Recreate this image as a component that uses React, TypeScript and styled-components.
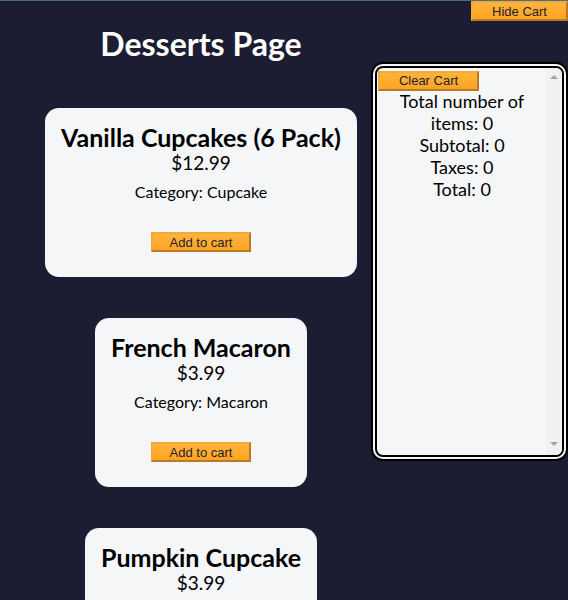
import React from 'react'
import styled, {createGlobalStyle} from 'styled-components'

const GlobalStyle = createGlobalStyle`
    html, body {
        margin: 0;
        padding: 0;
        background-color: #1c1c32;
    }
`

const TEXT_FONT = `'Trebuchet MS', Lato, sans-serif`
const BUTTON_FONT = `Arial, 'Liberation Sans', sans-serif`

const Page = styled.div`
    min-height: 100vh;
    border-top: 1px solid #4b6b86;
    box-sizing: border-box;
    font-family: ${TEXT_FONT};
`

const Main = styled.main`
    width: 402px;
    display: flex;
    flex-direction: column;
    align-items: center;
    padding-top: 24px;
`

const Title = styled.h1`
    margin: 0 0 46px;
    font-size: 32px;
    line-height: 37px;
    font-weight: 700;
    color: #ffffff;
`

const ProductList = styled.div`
    display: flex;
    flex-direction: column;
    align-items: center;
    gap: 41px;
`

const Card = styled.div`
    background-color: #f4f6f8;
    border-radius: 14px;
    padding: 15px 16px 25px;
    display: flex;
    flex-direction: column;
    align-items: center;
    color: #000000;
`

const ProductName = styled.h2`
    margin: 0;
    font-size: 25px;
    line-height: 28px;
    font-weight: 700;
`

const Price = styled.div`
    font-size: 19px;
    line-height: 23px;
`

const Category = styled.p`
    margin: 9px 0 0;
    font-size: 16px;
    line-height: 18px;
`

const OrangeButton = styled.button<{$width: number}>`
    width: ${(props) => props.$width}px;
    height: 20px;
    padding: 0;
    font-family: ${BUTTON_FONT};
    font-size: 13px;
    color: #1c1d33;
    background: linear-gradient(to bottom, #ffb43a, #ffa324);
    border: 2px solid;
    border-color: #f3a93a #b97a25 #b97a25 #f3a93a;
    cursor: pointer;
`

const AddButton = styled(OrangeButton)`
    margin-top: 31px;
`

const HideButton = styled(OrangeButton)`
    position: fixed;
    top: 1px;
    right: 0;
`

// side panel sits over the page on the right
const CartPanel = styled.aside`
    position: fixed;
    top: 62px;
    right: 0;
    width: 197px;
    height: 399px;
    box-sizing: border-box;
    border: 6px double #000000;
    border-radius: 12px;
    background-color: #f4f6f8;
    display: flex;
    overflow: hidden;
`

const CartContent = styled.div`
    flex: 1;
    min-width: 0;
    padding: 1px 0 0 1px;
    font-family: ${TEXT_FONT};
    color: #000000;
`

const ScrollTrack = styled.div`
    width: 16px;
    flex: none;
    background-color: #f1f1f1;
    display: flex;
    flex-direction: column;
    justify-content: space-between;
    align-items: center;
    padding: 7px 0 9px;
`

const ScrollArrow = styled.div<{$down?: boolean}>`
    width: 0;
    height: 0;
    border-left: 4px solid transparent;
    border-right: 4px solid transparent;
    ${(props) =>
        props.$down
            ? 'border-top: 4px solid #a3a3a3;'
            : 'border-bottom: 4px solid #a3a3a3;'}
`

const CartStats = styled.div`
    text-align: center;
    font-size: 18px;
    line-height: 22px;
    padding: 0 4px;
    margin-top: -1px;
`

type Product = {
    name: string
    price: string
    category: string
}

const products: Product[] = [
    {name: 'Vanilla Cupcakes (6 Pack)', price: '$12.99', category: 'Cupcake'},
    {name: 'French Macaron', price: '$3.99', category: 'Macaron'},
    {name: 'Pumpkin Cupcake', price: '$3.99', category: 'Cupcake'},
]

const ProductCard: React.FC<{product: Product}> = ({product}) => {
    return (
        <Card>
            <ProductName>{product.name}</ProductName>
            <Price>{product.price}</Price>
            <Category>Category: {product.category}</Category>
            <AddButton $width={100}>Add to cart</AddButton>
        </Card>
    )
}

const Cart: React.FC = () => {
    return (
        <CartPanel>
            <CartContent>
                <OrangeButton $width={101}>Clear Cart</OrangeButton>
                <CartStats>
                    <div>Total number of items: 0</div>
                    <div>Subtotal: 0</div>
                    <div>Taxes: 0</div>
                    <div>Total: 0</div>
                </CartStats>
            </CartContent>
            <ScrollTrack>
                <ScrollArrow />
                <ScrollArrow $down />
            </ScrollTrack>
        </CartPanel>
    )
}

export default function App() {
    return (
        <Page>
            <GlobalStyle />
            <HideButton $width={97}>Hide Cart</HideButton>
            <Main>
                <Title>Desserts Page</Title>
                <ProductList>
                    {products.map((product) => (
                        <ProductCard key={product.name} product={product} />
                    ))}
                </ProductList>
            </Main>
            <Cart />
        </Page>
    )
}
